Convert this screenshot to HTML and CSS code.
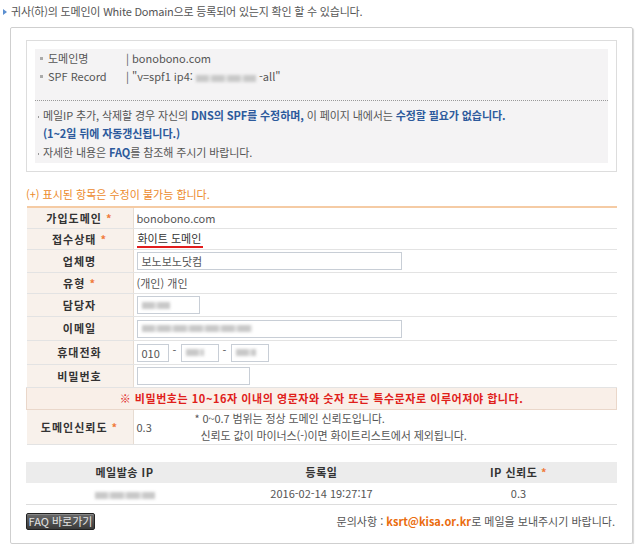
FILE: index.html
```html
<!DOCTYPE html>
<html lang="ko">
<head>
    <meta charset="UTF-8">
    <meta name="viewport" content="width=device-width, initial-scale=1.0">
    <title>White Domain 등록 확인</title>
    <link rel="stylesheet" href="styles.css">
</head>
<body>

    <p class="intro"><span class="arrow"></span>귀사(하)의 도메인이 White Domain으로 등록되어 있는지 확인 할 수 있습니다.</p>

    <div class="panel">

        <div class="notice">
            <div class="notice-in">
                <ul class="info">
                    <li><span class="key">도메인명</span><span>| bonobono.com</span></li>
                    <li><span class="key">SPF Record</span><span>| "v=spf1 ip4: <span class="blur w60"></span> -all"</span></li>
                </ul>
                <ul class="guide">
                    <li>메일IP 추가, 삭제할 경우 자신의 <b>DNS의 SPF를 수정하며,</b> 이 페이지 내에서는 <b>수정할 필요가 없습니다.</b><br><b>(1~2일 뒤에 자동갱신됩니다.)</b></li>
                    <li>자세한 내용은 <b>FAQ</b>를 참조해 주시기 바랍니다.</li>
                </ul>
            </div>
        </div>

        <p class="hint">(+) 표시된 항목은 수정이 불가능 합니다.</p>

        <table class="form">
            <tr class="h21">
                <th>가입도메인 <em>*</em></th>
                <td>bonobono.com</td>
            </tr>
            <tr class="h21">
                <th>접수상태 <em>*</em></th>
                <td><span class="status">화이트 도메인</span></td>
            </tr>
            <tr class="h23">
                <th>업체명</th>
                <td><span class="field w265">보노보노닷컴</span></td>
            </tr>
            <tr class="h21">
                <th>유형 <em>*</em></th>
                <td>(개인) 개인</td>
            </tr>
            <tr class="h23">
                <th>담당자</th>
                <td><span class="field w63"><span class="blur w28"></span></span></td>
            </tr>
            <tr class="h24">
                <th>이메일</th>
                <td><span class="field w265"><span class="blur w110"></span></span></td>
            </tr>
            <tr class="h24">
                <th>휴대전화</th>
                <td>
                    <span class="field w32">010</span><span class="dash">-</span><span class="field w38"><span class="blur w18"></span></span><span class="dash">-</span><span class="field w38"><span class="blur w20"></span></span>
                </td>
            </tr>
            <tr class="h23">
                <th>비밀번호</th>
                <td><span class="field w113"></span></td>
            </tr>
            <tr class="warn">
                <td colspan="2">※ 비밀번호는 10~16자 이내의 영문자와 숫자 또는 특수문자로 이루어져야 합니다.</td>
            </tr>
            <tr class="h34">
                <th>도메인신뢰도 <em>*</em></th>
                <td>
                    <div class="score">
                        <span class="score-val">0.3</span>
                        <p class="score-note">* 0~0.7 범위는 정상 도메인 신뢰도입니다.<br>&nbsp; 신뢰도 값이 마이너스(-)이면 화이트리스트에서 제외됩니다.</p>
                    </div>
                </td>
            </tr>
        </table>

        <table class="ips">
            <tr>
                <th>메일발송 IP</th>
                <th>등록일</th>
                <th>IP 신뢰도 <em>*</em></th>
            </tr>
            <tr>
                <td><span class="blur w60"></span></td>
                <td>2016-02-14 19:27:17</td>
                <td>0.3</td>
            </tr>
        </table>

        <div class="foot">
            <button class="btn">FAQ 바로가기</button>
            <p>문의사항 : <b>ksrt@kisa.or.kr</b>로 메일을 보내주시기 바랍니다.</p>
        </div>

    </div>

</body>
</html>
```

FILE: styles.css
```css
body {
    margin: 0;
    font-family: "Noto Sans CJK KR", "Noto Sans", sans-serif;
    font-size: 11px;
    color: #555;
    background-color: #fff;
}

ul, p {
    margin: 0;
    padding: 0;
    list-style: none;
}

.intro {
    position: relative;
    height: 22px;
    line-height: 22px;
    padding-left: 11px;
    letter-spacing: -0.2px;
}

.arrow {
    position: absolute;
    left: 3px;
    top: 9px;
    border-left: 4px solid #5b8fd0;
    border-top: 3px solid transparent;
    border-bottom: 3px solid transparent;
}

.panel {
    margin: 5px 0 0 10px;
    width: 591px;
    padding: 12px 15px 13px;
    border: 1px solid #cfcfcf;
    border-radius: 2px;
    box-shadow: 1px 1px 1px #d8d8d8;
}

/* 안내 박스 */
.notice {
    border: 1px solid #ddd;
    padding: 8px;
}

.notice-in {
    background-color: #f4f3f4;
    height: 114px;
}

.info {
    padding: 0 0 15px 5px;
    border-bottom: 1px dotted #999;
}

.info li {
    position: relative;
    display: flex;
    height: 18px;
    line-height: 18px;
    padding-left: 8px;
}

.info li::before {
    content: "";
    position: absolute;
    left: 0;
    top: 8px;
    width: 3px;
    height: 3px;
    background-color: #aaa;
}

.info .key {
    width: 78px;
}

.guide {
    padding: 6px 0 0 3px;
    line-height: 17.5px;
    letter-spacing: -0.1px;
}

.guide li {
    position: relative;
    padding-left: 5px;
}

.guide li + li {
    margin-top: 2px;
}

.guide li::before {
    content: "";
    position: absolute;
    left: 0;
    top: 9px;
    width: 1px;
    height: 2px;
    background-color: #999;
}

.guide b {
    color: #2d5a9c;
}

.hint {
    margin-top: 14px;
    height: 17px;
    line-height: 17px;
    color: #ec8a2c;
}

/* 신청 정보 표 */
.form {
    margin-top: 3px;
    width: 591px;
    border-collapse: collapse;
    border-top: 2px solid #f5cba4;
}

.form th, .form td {
    padding: 0;
    border-bottom: 1px solid #e3e3e3;
    text-align: left;
    font-weight: normal;
}

.form th {
    width: 106px;
    background-color: #f8f1eb;
    border-right: 1px solid #e7dcd2;
    color: #333;
    font-weight: bold;
    text-align: center;
    letter-spacing: 1px;
}

.form td {
    padding-left: 3px;
}

em {
    font-style: normal;
    color: #f07a3a;
}

.h21 { height: 21px; }
.h23 { height: 23px; }
.h24 { height: 24px; }
.h34 { height: 34px; }

.status {
    display: inline-block;
    padding: 0 2px 1px 1px;
    border-bottom: 2px solid #e11d1d;
    color: #333;
    line-height: 14px;
}

.field {
    display: inline-flex;
    align-items: center;
    vertical-align: middle;
    box-sizing: border-box;
    height: 18px;
    padding-left: 4px;
    border: 1px solid #c8ced6;
    background-color: #fff;
}

.w32 { width: 32px; }
.w38 { width: 38px; }
.w63 { width: 63px; }
.w113 { width: 113px; }
.w265 { width: 265px; }

.dash {
    display: inline-block;
    width: 12px;
    text-align: center;
}

.blur {
    display: inline-block;
    height: 7px;
    vertical-align: middle;
    background: repeating-linear-gradient(90deg, #c8c8c8 0 12px, #dedede 12px 16px);
    filter: blur(1.6px);
}

.w18 { width: 18px; }
.w20 { width: 20px; }
.w28 { width: 28px; }
.w60 { width: 60px; }
.w110 { width: 110px; }

.warn td {
    height: 21px;
    padding: 0;
    background-color: #f9efe8;
    border: 1px solid #ead7ca;
    color: #e0201a;
    font-weight: bold;
    text-align: center;
    letter-spacing: 0.55px;
}

.score {
    display: flex;
    align-items: center;
}

.score-val {
    width: 58px;
}

.score-note {
    line-height: 17px;
    letter-spacing: -0.1px;
}

/* 메일발송 IP 표 */
.ips {
    margin-top: 17px;
    width: 591px;
    border-collapse: collapse;
    table-layout: fixed;
}

.ips th, .ips td {
    height: 21px;
    padding: 0;
    text-align: center;
}

.ips th {
    background-color: #ececec;
    color: #333;
    letter-spacing: 0.5px;
}

.ips td {
    border-bottom: 1px solid #ddd;
}

.foot {
    display: flex;
    justify-content: space-between;
    align-items: center;
    margin-top: 8px;
}

.btn {
    height: 17px;
    width: 69px;
    padding: 0;
    border: 1px solid #222;
    border-radius: 2px;
    background: linear-gradient(#6a6a6a, #3a3a3a);
    box-shadow: inset 0 1px 0 #888;
    color: #e4e4e4;
    font-family: inherit;
    font-size: 11px;
    line-height: 15px;
}

.foot p {
    margin-right: 2px;
}

.foot b {
    color: #ea6c0e;
}
```
